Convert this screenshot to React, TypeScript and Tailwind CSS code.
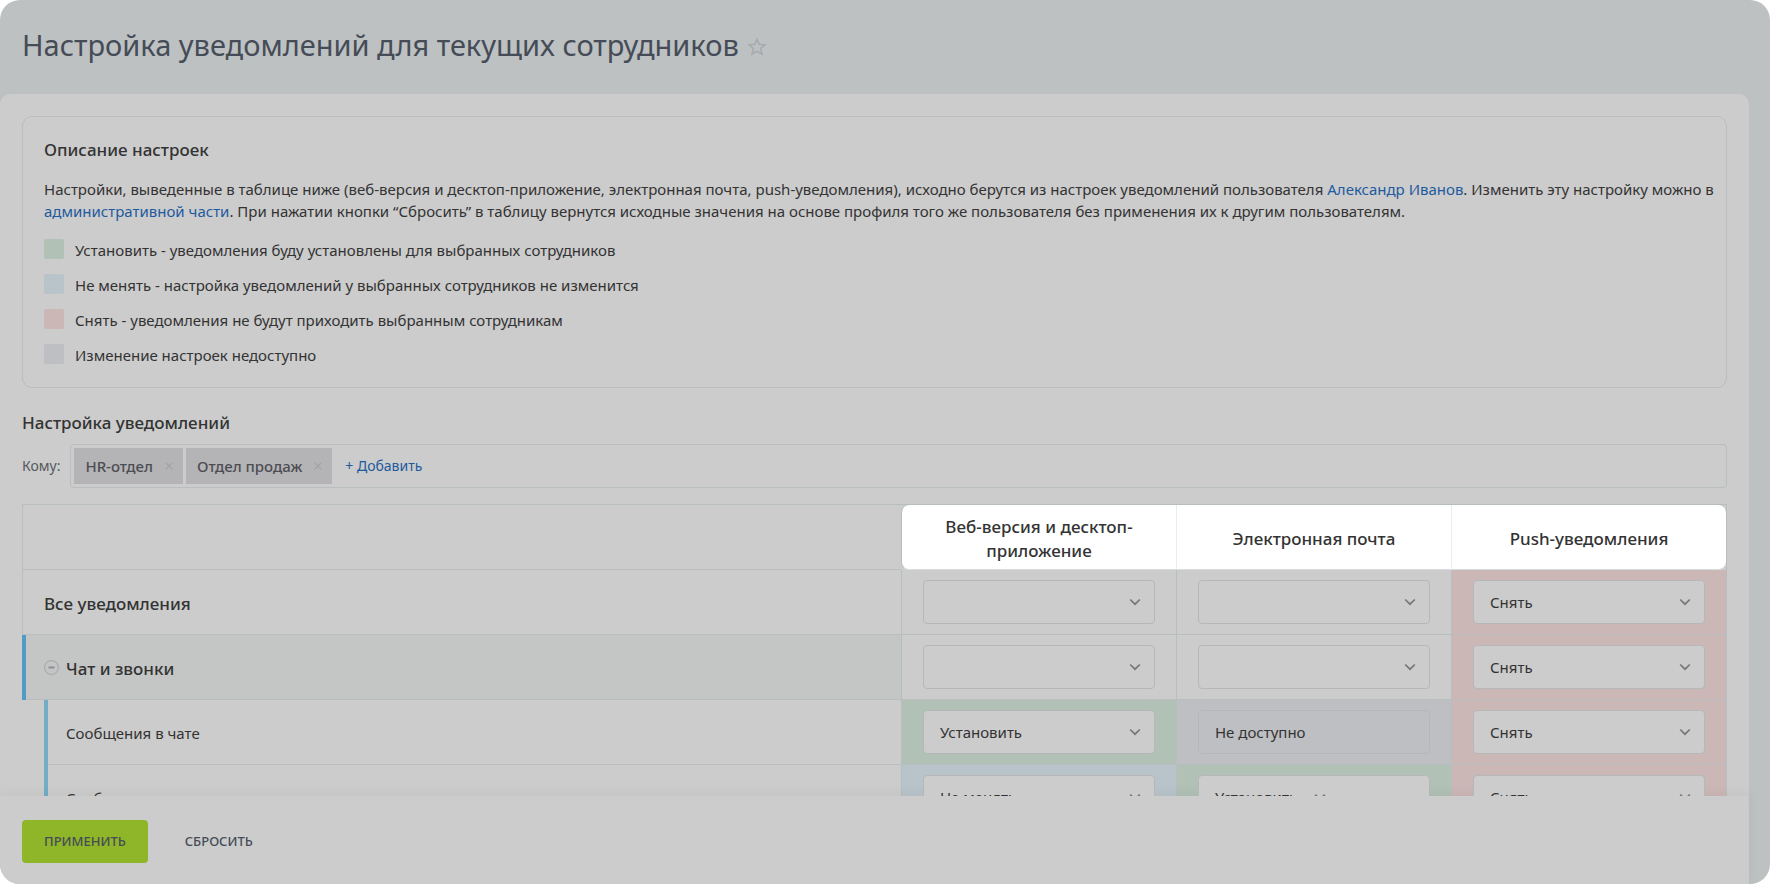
import React from "react";

type Tone = "none" | "green" | "blue" | "red" | "gray";

type Cell = { value: string; tone: Tone; near?: boolean };

type Row = { label: string; level: 0 | 1 | 2; cells: Cell[] };

const toneClass: Record<Tone, string> = {
  none: "",
  green: "bg-[#b1c1b6]",
  blue: "bg-[#b8c4ca]",
  red: "bg-[#ccb7b7]",
  gray: "bg-[#bebfc2]",
};

const legend: { tone: Tone; text: string }[] = [
  { tone: "green", text: "Установить - уведомления буду установлены для выбранных сотрудников" },
  { tone: "blue", text: "Не менять - настройка уведомлений у выбранных сотрудников не изменится" },
  { tone: "red", text: "Снять - уведомления не будут приходить выбранным сотрудникам" },
  { tone: "gray", text: "Изменение настроек недоступно" },
];

const columns = ["Веб-версия и десктоп-приложение", "Электронная почта", "Push-уведомления"];

const off: Cell = { value: "Снять", tone: "red" };
const empty: Cell = { value: "", tone: "none" };

const rows: Row[] = [
  { label: "Все уведомления", level: 0, cells: [empty, empty, off] },
  { label: "Чат и звонки", level: 1, cells: [empty, empty, off] },
  {
    label: "Сообщения в чате",
    level: 2,
    cells: [{ value: "Установить", tone: "green" }, { value: "Не доступно", tone: "gray" }, off],
  },
  {
    label: "Сообщения в открытых линиях",
    level: 2,
    cells: [{ value: "Не менять", tone: "blue" }, { value: "Установить", tone: "green", near: true }, off],
  },
];

function Star() {
  return (
    <svg width="20" height="20" viewBox="0 0 20 20" fill="none" stroke="#a7abad" strokeWidth="1.6" strokeLinejoin="miter">
      <path d="M10 2.2L12.2 7.4L18 7.8L13.6 11.5L15 17.2L10 14.2L5 17.2L6.4 11.5L2 7.8L7.8 7.4Z" />
    </svg>
  );
}

function Chevron() {
  return (
    <svg width="12" height="8" viewBox="0 0 12 8" fill="none" stroke="#777" strokeWidth="1.7">
      <path d="M1.2 1.5L6 6.2l4.8-4.7" />
    </svg>
  );
}

function Field({ cell, label }: { cell: Cell; label: string }) {
  const disabled = cell.tone === "gray";
  return (
    <div className="relative">
      <select
        aria-label={label}
        disabled={disabled}
        defaultValue={cell.value}
        className={
          "block h-11 w-full appearance-none rounded border px-4 text-[15px] text-[#333] opacity-100 " +
          (disabled ? "border-[#b4b6b9] bg-[#bebfc2]" : "border-[#b5b7b8] bg-[#ccc]")
        }
      >
        <option value={cell.value}>{cell.value}</option>
      </select>
      {!disabled && (
        <span
          className={
            "pointer-events-none absolute inset-y-0 flex items-center " + (cell.near ? "left-[116px]" : "right-3.5")
          }
        >
          <Chevron />
        </span>
      )}
    </div>
  );
}

function RowLabel({ row }: { row: Row }) {
  if (row.level === 0) {
    return (
      <div className="flex h-full items-center border-b border-l border-[#b8bdbf] pt-1 pl-[21px] text-[17px] font-medium">
        {row.label}
      </div>
    );
  }
  if (row.level === 1) {
    return (
      <div className="h-full border-l-4 border-[#4f9dc2]">
        <div className="flex h-full items-center gap-[7px] border-b border-[#b8bdbf] bg-[#c4c6c5] pl-[18px] text-[17px] font-medium">
          <button type="button" aria-label="Свернуть раздел">
            <svg width="15" height="15" viewBox="0 0 15 15" fill="none" stroke="#a9abb0">
              <circle cx="7.5" cy="7.5" r="6.9" strokeWidth="1.2" />
              <path d="M4.5 7.5h6" stroke="#8b8f95" strokeWidth="2" />
            </svg>
          </button>
          <span className="pt-1">{row.label}</span>
        </div>
      </div>
    );
  }
  return (
    <div className="h-full pl-[22px]">
      <div className="h-full border-l-4 border-[#72adc6]">
        <div className="flex h-full items-center border-b border-[#b8bdbf] pt-0.5 pl-[18px] text-[15px]">{row.label}</div>
      </div>
    </div>
  );
}

function Tag({ name }: { name: string }) {
  return (
    <span className="flex h-9 items-center gap-2 bg-[#b4b4b6] pr-1.5 pl-[11px] text-[15px] font-medium text-[#4c4d52]">
      {name}
      <button type="button" aria-label={"Удалить " + name} className="flex w-4 justify-center">
        <svg width="8" height="8" viewBox="0 0 8 8" stroke="#a0a2a6" strokeWidth="1.2">
          <path d="M.7.7l6.6 6.6M7.3.7L.7 7.3" />
        </svg>
      </button>
    </span>
  );
}

export default function App() {
  return (
    <div className="flex h-screen flex-col overflow-hidden rounded-[20px] bg-[#bdc1c2] font-['Noto_Sans','Open_Sans',sans-serif] text-[#333]">
      <header className="flex h-[94px] shrink-0 items-center gap-2 px-[22px] pb-1">
        <h1 className="text-[29px] leading-[38px] text-[#454c57]">Настройка уведомлений для текущих сотрудников</h1>
        <button type="button" aria-label="Добавить в избранное" className="pt-1">
          <Star />
        </button>
      </header>

      <div className="mr-[21px] flex min-h-0 flex-1 flex-col">
        <main className="min-h-0 flex-1 overflow-hidden rounded-t-[10px] bg-[#ccc] px-[22px] pt-[22px]">
          <section className="rounded-[10px] border border-[#b8bdbf] pt-[21px] pr-[9px] pb-[23px] pl-[21px]">
            <h2 className="text-[17px] leading-6 font-medium">Описание настроек</h2>
            <p className="mt-4 text-[15px] leading-[22px]">
              Настройки, выведенные в таблице ниже (веб-версия и десктоп-приложение, электронная почта, push-уведомления), исходно берутся из
              настроек уведомлений пользователя{" "}
              <a href="#user" className="text-[#1e5a9e]">
                Александр Иванов
              </a>
              . Изменить эту настройку можно в{" "}
              <a href="#admin" className="text-[#1e5a9e]">
                административной части
              </a>
              . При нажатии кнопки “Сбросить” в таблицу вернутся исходные значения на основе профиля того же пользователя без применения их к
              другим пользователям.
            </p>
            <ul className="mt-[17px] flex flex-col gap-[15px]">
              {legend.map((item) => (
                <li key={item.tone} className="flex h-5 items-center gap-[11px] text-[15px]">
                  <span className={"size-5 rounded-xs " + toneClass[item.tone]} />
                  <span className="pt-0.5">{item.text}</span>
                </li>
              ))}
            </ul>
          </section>

          <h2 className="mt-[23px] text-[17px] leading-6 font-medium">Настройка уведомлений</h2>
          <div className="mt-[9px] flex items-center gap-2.5">
            <span className="shrink-0 text-sm text-[#555a60]">Кому:</span>
            <div className="flex h-11 flex-1 items-center gap-[3px] rounded border border-[#b8bdbf] px-[3px]">
              <Tag name="HR-отдел" />
              <Tag name="Отдел продаж" />
              <button type="button" className="ml-2.5 text-sm text-[#1e5a9e]">
                + Добавить
              </button>
            </div>
          </div>

          <table className="mt-4 w-full table-fixed border-separate border-spacing-0 border-t border-r border-[#b8bdbf]">
            <thead>
              <tr className="h-[65px]">
                <td className="border-b border-l border-[#b8bdbf]" />
                {columns.map((name, i) => (
                  <th
                    key={name}
                    className={
                      "w-[16.14%] border-b border-l border-b-[#d8dcde] bg-white px-8 pt-[3px] pb-0 text-[17px] leading-6 font-medium " +
                      (i === 0
                        ? "rounded-l-lg border-l-[#b8bdbf]"
                        : i === 2
                          ? "rounded-r-lg border-l-[#e8eef0]"
                          : "border-l-[#e8eef0]")
                    }
                  >
                    {name}
                  </th>
                ))}
              </tr>
            </thead>
            <tbody>
              {rows.map((row) => (
                <tr key={row.label} className="h-[65px]">
                  <th className="h-[65px] p-0 text-left font-normal">
                    <RowLabel row={row} />
                  </th>
                  {row.cells.map((cell, i) => (
                    <td key={i} className={"border-b border-l border-[#b8bdbf] px-[21px] py-0 " + toneClass[cell.tone]}>
                      <Field cell={cell} label={row.label + ": " + columns[i]} />
                    </td>
                  ))}
                </tr>
              ))}
            </tbody>
          </table>
        </main>

        <footer className="flex h-22 shrink-0 items-center gap-[37px] bg-[#ccc] px-[22px] pt-0.5 shadow-[0_-2px_12px_rgba(0,0,0,0.05)]">
          <button type="button" className="h-[43px] rounded bg-[#8fb528] px-[22px] pt-0.5 text-[13px] font-medium text-[#454c57]">
            ПРИМЕНИТЬ
          </button>
          <button type="button" className="pt-0.5 text-[13px] font-medium text-[#454c57]">
            СБРОСИТЬ
          </button>
        </footer>
      </div>
    </div>
  );
}
